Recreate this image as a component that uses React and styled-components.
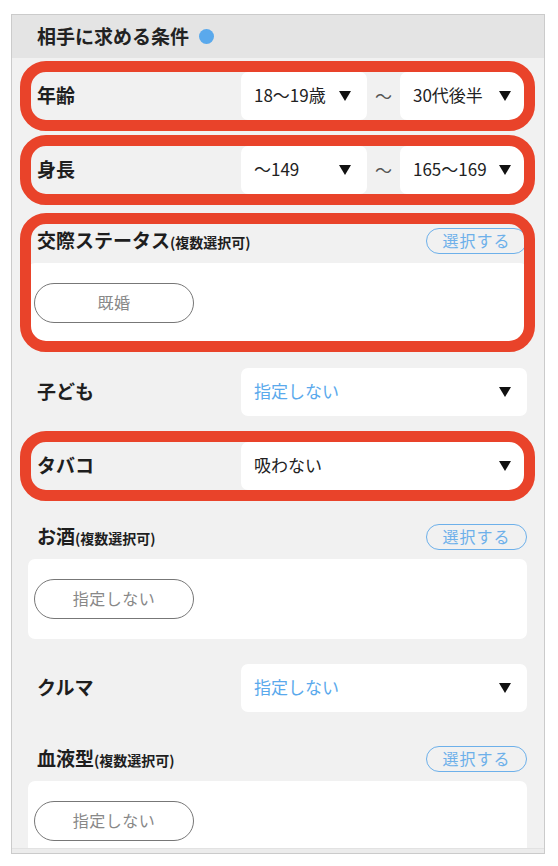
import React from "react";
import styled, { createGlobalStyle, css } from "styled-components";

const GlobalStyle = createGlobalStyle`
  html, body { margin: 0; padding: 0; background: #ffffff; }
  body {
    font-family: "Noto Sans CJK JP", "Noto Sans", sans-serif;
    color: #222;
  }
  * { box-sizing: border-box; }
`;

const marked = css`
  position: relative;
  &::after {
    content: "";
    position: absolute;
    top: ${(p) => p.$mark.top}px;
    bottom: ${(p) => p.$mark.bottom}px;
    left: -8px;
    right: -8px;
    border: 11px solid #e9432a;
    border-radius: 26px;
    pointer-events: none;
  }
`;

const Panel = styled.div`
  margin: 14px 0 0 11px;
  width: 534px;
  height: 840px;
  border: 1px solid #cbcbcb;
  background: #f1f1f1;
  display: flex;
  flex-direction: column;
  overflow: hidden;
`;

const Header = styled.div`
  height: 43px;
  flex: none;
  background: #e4e4e4;
  display: flex;
  align-items: center;
  gap: 10px;
  padding-left: 25px;
`;

const HeaderTitle = styled.h2`
  margin: 0;
  padding-bottom: 3px;
  font-size: 19px;
  font-weight: 700;
  color: #222;
  line-height: 1;
`;

const Dot = styled.span`
  width: 15px;
  height: 15px;
  border-radius: 50%;
  background: #5aa9ec;
`;

const Body = styled.div`
  flex: 1;
  overflow: hidden;
  padding: 14px 17px 0 16px;
  display: flex;
  flex-direction: column;
`;

const BottomBar = styled.div`
  height: 5px;
  flex: none;
  background: #ececec;
  border-top: 1px solid #e2e2e2;
`;

const Row = styled.div`
  flex: none;
  margin-top: ${(p) => p.$mt}px;
  height: 48px;
  display: grid;
  grid-template-columns: 213px 1fr;
  align-items: center;
  ${(p) => p.$mark && marked}
`;

const Label = styled.div`
  padding-left: 9px;
  padding-bottom: 3px;
  line-height: 1;
  font-size: 19px;
  font-weight: 700;
  color: #1e1e1e;
`;

const Sub = styled.span`
  font-size: 14px;
  font-weight: 700;
`;

const Pair = styled.div`
  display: grid;
  grid-template-columns: 126px 1fr 127px;
  align-items: center;
`;

const Tilde = styled.span`
  text-align: center;
  font-size: 17px;
  color: #555;
  padding-bottom: 2px;
`;

const Select = styled.div`
  height: 48px;
  background: #ffffff;
  border-radius: 7px;
  display: flex;
  align-items: center;
  justify-content: space-between;
  padding: 0 16px 0 13px;
  font-size: 17px;
  color: ${(p) => (p.$placeholder ? "#5aa9ec" : "#222")};
  white-space: nowrap;
`;

const SelectText = styled.span`
  line-height: 1;
  padding-bottom: 3px;
`;

const Section = styled.div`
  flex: none;
  margin-top: 34px;
  ${(p) => p.$mark && marked}
`;

const SectionHead = styled.div`
  height: 26px;
  display: flex;
  align-items: center;
  justify-content: space-between;
`;

const PickButton = styled.button`
  width: 101px;
  height: 26px;
  border: 1.5px solid #6db0ea;
  border-radius: 13px;
  background: transparent;
  color: #6db0ea;
  font-family: inherit;
  font-size: 16px;
  letter-spacing: 1px;
  padding: 0 0 2px;
  line-height: 1;
`;

const Box = styled.div`
  margin-top: 9px;
  height: 80px;
  background: #ffffff;
  border-radius: 7px;
  padding: 20px 0 0 6px;
`;

const Chip = styled.div`
  width: 160px;
  height: 40px;
  border: 1px solid #777;
  border-radius: 20px;
  display: flex;
  align-items: center;
  justify-content: center;
  padding-bottom: 2px;
  font-size: 16px;
  color: #888;
  letter-spacing: 0.5px;
`;

const Caret = () => (
  <svg width="12" height="10" viewBox="0 0 12 10">
    <polygon points="0,0 12,0 6,10" fill="#111" />
  </svg>
);

const Sel = ({ children, placeholder }) => (
  <Select $placeholder={placeholder}>
    <SelectText>{children}</SelectText>
    <Caret />
  </Select>
);

const rowMark = { top: -11, bottom: -11 };
const secMark = { top: -15, bottom: -9 };

const ChoiceSection = ({ title, chip, mark }) => (
  <Section $mark={mark}>
    <SectionHead>
      <Label>
        {title}
        <Sub>(複数選択可)</Sub>
      </Label>
      <PickButton>選択する</PickButton>
    </SectionHead>
    <Box>
      <Chip>{chip}</Chip>
    </Box>
  </Section>
);

export default function App() {
  return (
    <>
      <GlobalStyle />
      <Panel>
        <Header>
          <HeaderTitle>相手に求める条件</HeaderTitle>
          <Dot />
        </Header>
        <Body>
          <Row $mt={0} $mark={rowMark}>
            <Label>年齢</Label>
            <Pair>
              <Sel>18〜19歳</Sel>
              <Tilde>〜</Tilde>
              <Sel>30代後半</Sel>
            </Pair>
          </Row>
          <Row $mt={26} $mark={rowMark}>
            <Label>身長</Label>
            <Pair>
              <Sel>〜149</Sel>
              <Tilde>〜</Tilde>
              <Sel>165〜169</Sel>
            </Pair>
          </Row>
          <ChoiceSection title="交際ステータス" chip="既婚" mark={secMark} />
          <Row $mt={25}>
            <Label>子ども</Label>
            <Sel placeholder>指定しない</Sel>
          </Row>
          <Row $mt={26} $mark={rowMark}>
            <Label>タバコ</Label>
            <Sel>吸わない</Sel>
          </Row>
          <ChoiceSection title="お酒" chip="指定しない" />
          <Row $mt={25}>
            <Label>クルマ</Label>
            <Sel placeholder>指定しない</Sel>
          </Row>
          <ChoiceSection title="血液型" chip="指定しない" />
        </Body>
        <BottomBar />
      </Panel>
    </>
  );
}
